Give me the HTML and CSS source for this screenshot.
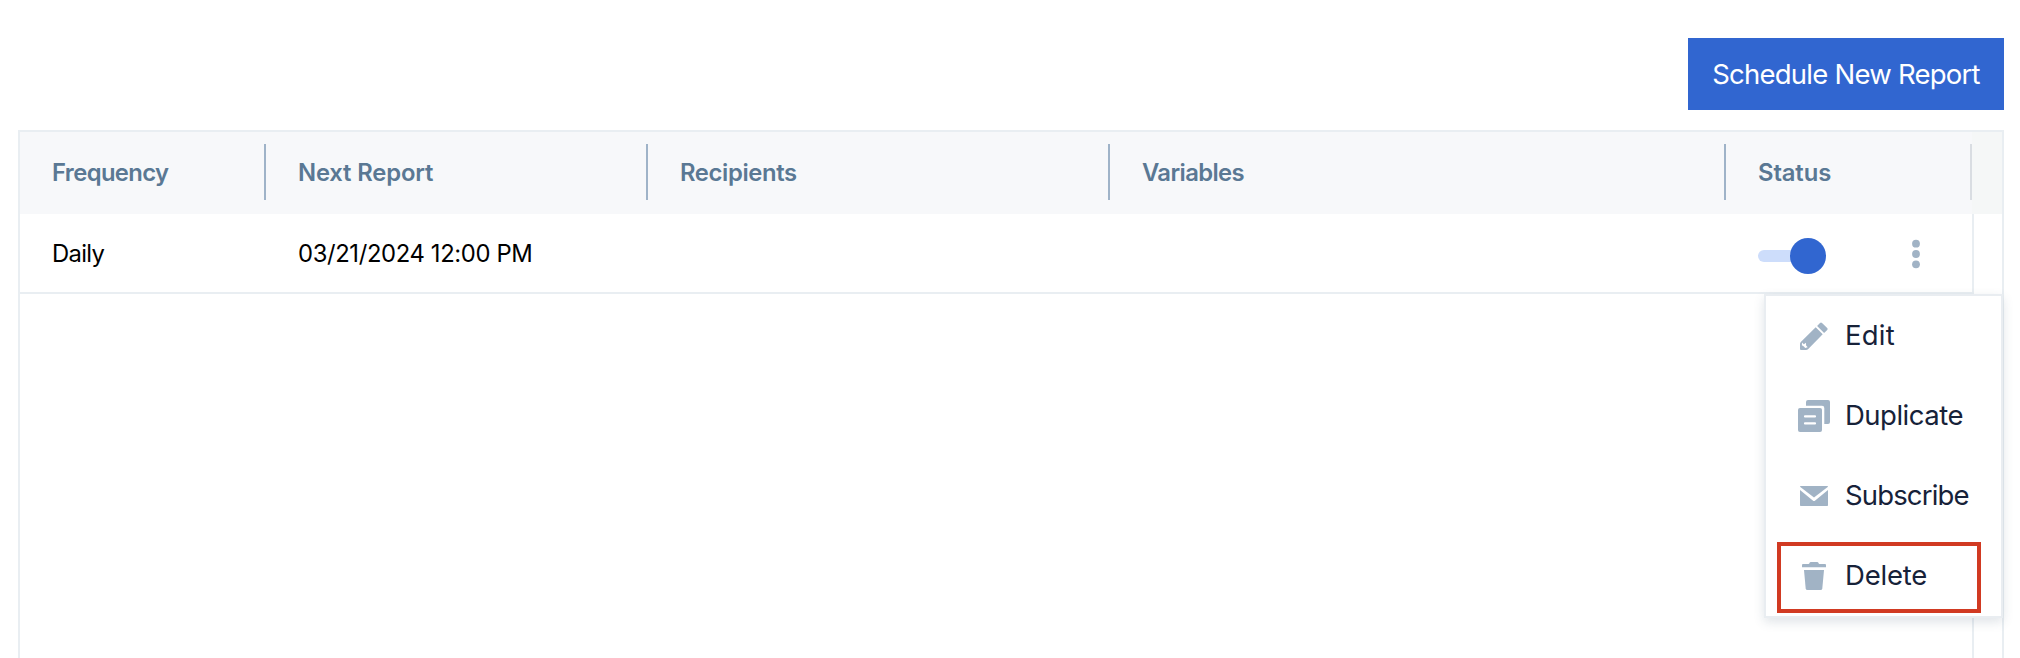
FILE: index.html
```html
<!DOCTYPE html>
<html lang="en">
<head>
<meta charset="utf-8">
<title>Scheduled Reports</title>
<link rel="stylesheet" href="styles.css">
</head>
<body>
<div class="page">
  <div class="toolbar"><button class="primary">Schedule New Report</button></div>
  <div class="table">
    <div class="row head">
      <div class="cell frequency">Frequency</div>
      <div class="cell next">Next Report</div>
      <div class="cell recipients">Recipients</div>
      <div class="cell variables">Variables</div>
      <div class="cell status">Status</div>
      <div class="gutter"></div>
    </div>
    <div class="row body">
      <div class="cell daily">Daily</div>
      <div class="cell date">03/21/2024 12:00 PM</div>
      <div class="cell"></div>
      <div class="cell"></div>
      <div class="cell controls">
        <span class="toggle"><span class="knob"></span></span>
        <svg class="dots" width="8" height="30" viewBox="0 0 8 30"><circle cx="4" cy="4.7" r="3.9"/><circle cx="4" cy="15" r="3.9"/><circle cx="4" cy="25.3" r="3.9"/></svg>
        <div class="menu">
          <div class="item edit">
            <svg width="32" height="32" viewBox="0 0 32 32"><path d="M17.7 7.3 24.7 14.3 10 29.2Q9.2 30 8 30H3Q2 30 2 29V24Q2 22.8 2.8 22ZM19.1 5.9 22 2.9Q23 2 24 2.9L29.2 8Q30.2 9 29.2 10L26.1 12.9Z"/><path class="cut" d="M4 22.6 5.8 24.3 8 22.8 8.1 25.6 9.7 27.3 7.2 28 5.9 26.4 3.9 25.2Z"/></svg>
            <span>Edit</span>
          </div>
          <div class="item duplicate">
            <svg width="32" height="32" viewBox="0 0 32 32"><rect x="0" y="8" width="24" height="24" rx="2"/><path d="M8 5.7V2Q8 0 10 0H30Q32 0 32 2V22Q32 24 30 24H26.3V8Q26.3 5.7 24 5.7Z"/><path class="line" d="M7 16.4H17M7 23.4H17"/></svg>
            <span>Duplicate</span>
          </div>
          <div class="item subscribe">
            <svg width="32" height="32" viewBox="0 0 32 32"><path d="M2 6.7Q2 6 2.8 6H29.2Q30 6 30 6.7L16 17.6Z"/><path d="M2 10 14.8 20.4Q16 21.4 17.2 20.4L30 10V25.2Q30 26 29.2 26H2.8Q2 26 2 25.2Z"/></svg>
            <span>Subscribe</span>
          </div>
          <div class="item delete">
            <svg width="32" height="32" viewBox="0 0 32 32"><path d="M4 5Q4 4 5 4H10.5Q11.2 4 11.4 3.2Q11.7 2 13 2H19Q20.3 2 20.6 3.2Q20.8 4 21.5 4H27Q28 4 28 5V7.2H4Z"/><path d="M6 10H26L24.3 28.4Q24.1 30 22.5 30H9.5Q7.9 30 7.7 28.4Z"/></svg>
            <span>Delete</span>
            <span class="marker"></span>
          </div>
        </div>
      </div>
      <div class="gutter"></div>
    </div>
    <div class="rest"></div>
  </div>
</div>
</body>
</html>
```
FILE: styles.css
```css
* { box-sizing: border-box; }

body {
  margin: 0;
  background: #fff;
  font-family: Inter, "Liberation Sans", sans-serif;
}

.page {
  display: flex;
  flex-direction: column;
  height: 658px;
  padding: 38px 16px 0 18px;
  overflow: hidden;
}

.toolbar {
  display: flex;
  justify-content: flex-end;
  margin-bottom: 20px;
}

.primary {
  width: 316px;
  height: 72px;
  padding: 0;
  border: 0;
  background: #3166d0;
  color: #fff;
  font: 400 27.5px Inter, sans-serif;
  letter-spacing: -0.76px;
}

.table {
  display: flex;
  flex: 1;
  flex-direction: column;
  border: 2px solid #e9eef2;
  border-bottom: 0;
}

.row {
  display: grid;
  grid-template-columns: 246px 382px 462px 616px 246px 1fr;
}

.cell {
  display: flex;
  align-items: center;
  padding-left: 32px;
}

.head {
  height: 82px;
  background: #f7f8fa;
  color: #5a7894;
  font-size: 23.8px;
  font-weight: 600;
}

.head .cell {
  height: 56px;
  margin-top: 12px;
  border-right: 2px solid #9fb3c8;
}

.head .status { border-right-color: #d9dde2; }
.head .gutter { background: #f5f7f7; }

.frequency { letter-spacing: -0.6px; }
.next { letter-spacing: -0.15px; }
.recipients { letter-spacing: -0.36px; }
.variables { letter-spacing: -0.6px; }
.status { letter-spacing: -0.1px; }

.body {
  height: 80px;
  color: #000;
  font-size: 23.8px;
}

.body .cell { border-bottom: 2px solid #e9eef2; }
.body .gutter { border-left: 2px solid #e9eef2; }
.daily { letter-spacing: -0.7px; }
.date { letter-spacing: -0.36px; }

.controls { position: relative; }

.toggle {
  display: flex;
  justify-content: flex-end;
  align-items: center;
  width: 68px;
  height: 12px;
  margin-top: 6px;
  border-radius: 6px;
  background: #cdddfb;
}

.knob {
  width: 36px;
  height: 36px;
  border-radius: 50%;
  background: #3166d0;
}

.dots {
  margin-left: 86px;
  margin-top: 2px;
  fill: #a1b3c5;
}

.rest {
  flex: 1;
  margin-right: 28px;
  border-right: 2px solid #e9eef2;
}

.menu {
  position: absolute;
  z-index: 1;
  top: 80px;
  left: 38px;
  width: 239px;
  height: 324px;
  border: 2px solid #e9edf1;
  background: #fff;
  box-shadow: 0 4px 10px rgba(60, 85, 110, 0.16);
  color: #172239;
  font-size: 27.5px;
  font-weight: 400;
}

.item {
  position: relative;
  display: flex;
  align-items: center;
  gap: 15px;
  height: 80px;
  padding-left: 32px;
}

.item > span { padding-bottom: 2px; }

.item svg { fill: #a1b3c5; }
.item .cut { fill: #fff; }
.item .line {
  fill: none;
  stroke: #fff;
  stroke-width: 2.2;
  stroke-linecap: round;
}

.edit { letter-spacing: 0.2px; }
.duplicate { letter-spacing: -0.5px; }
.subscribe { letter-spacing: -0.85px; }
.delete { letter-spacing: -0.2px; }

.marker {
  position: absolute;
  top: 6px;
  left: 11px;
  width: 204px;
  height: 71px;
  border: 4px solid #d13a22;
}
```
